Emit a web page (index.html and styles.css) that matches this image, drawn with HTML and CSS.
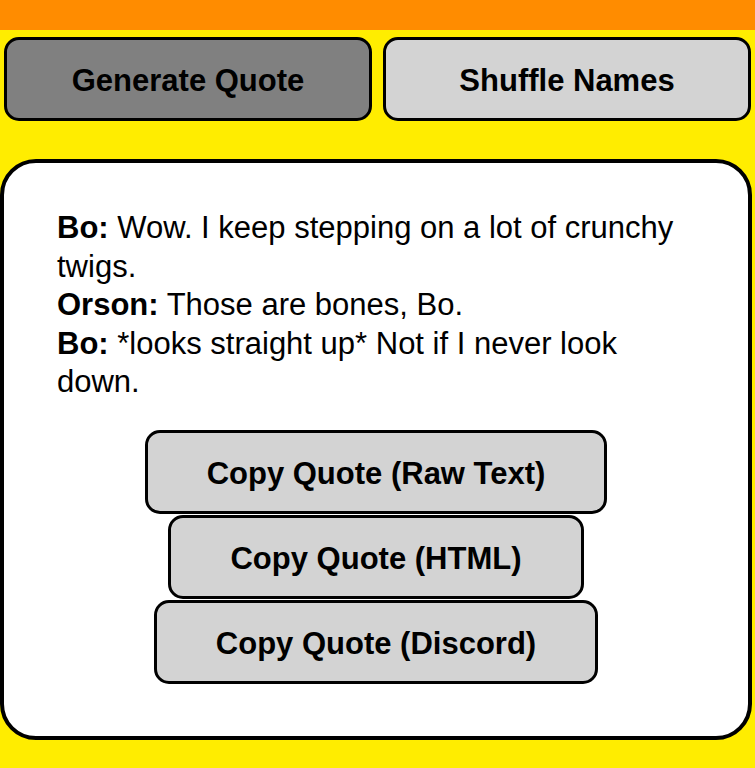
FILE: index.html
```html
<!DOCTYPE html>
<html>
<head>
<meta charset="utf-8">
<link rel="stylesheet" href="styles.css">
</head>
<body>
<header class="topbar"></header>
<div class="actions">
  <button class="btn btn-dark">Generate Quote</button>
  <button class="btn btn-light">Shuffle Names</button>
</div>
<main class="card">
  <div class="quote">
    <div class="line"><b>Bo:</b> Wow. I keep stepping on a lot of crunchy twigs.</div>
    <div class="line"><b>Orson:</b> Those are bones, Bo.</div>
    <div class="line"><b>Bo:</b> *looks straight up* Not if I never look down.</div>
  </div>
  <div class="copies">
    <button class="btn btn-light copy">Copy Quote (Raw Text)</button>
    <button class="btn btn-light copy">Copy Quote (HTML)</button>
    <button class="btn btn-light copy">Copy Quote (Discord)</button>
  </div>
</main>
</body>
</html>
```

FILE: styles.css
```css
html, body {
  margin: 0;
  padding: 0;
}
body {
  background: #ffed00;
  font-family: "Liberation Sans", Arial, sans-serif;
  color: #000;
  height: 768px;
  overflow: hidden;
}
.topbar {
  height: 30px;
  background: #ff8c00;
}
.actions {
  display: flex;
  gap: 11px;
  padding: 7px 4px 0;
}
.btn {
  box-sizing: border-box;
  font-family: "Liberation Sans", Arial, sans-serif;
  font-weight: bold;
  font-size: 31px;
  color: #000;
  border: 3px solid #000;
  border-radius: 15px;
  cursor: pointer;
}
.actions .btn {
  flex: 1;
  height: 84px;
  padding: 4px 0 0;
}
.btn-dark { background: #808080; }
.btn-light { background: #d3d3d3; }
.card {
  box-sizing: border-box;
  width: 752px;
  height: 581px;
  margin-top: 38px;
  background: #fff;
  border: 4px solid #000;
  border-radius: 36px;
  padding: 46px 53px 0 53px;
}
.quote {
  font-size: 31px;
  line-height: 38.5px;
}
.copies {
  display: flex;
  flex-direction: column;
  align-items: center;
  gap: 1px;
  margin-top: 28px;
}
.copy {
  height: 84px;
  padding: 4px 59px 0;
}
```
